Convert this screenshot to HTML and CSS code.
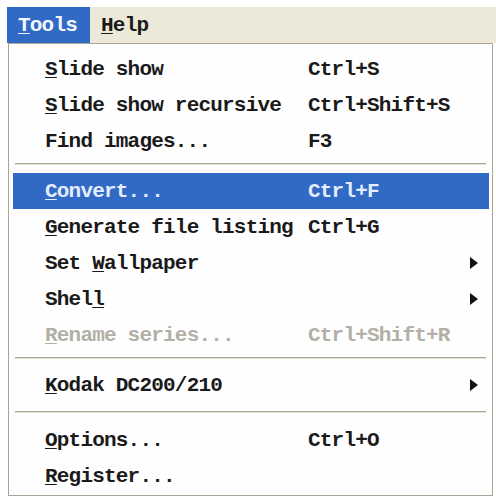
FILE: index.html
```html
<!DOCTYPE html>
<html>
<head>
<meta charset="utf-8">
<link rel="stylesheet" href="styles.css">
</head>
<body>
<div class="screen">
  <div class="menubar">
    <div class="top-item active"><u>T</u>ools</div>
    <div class="top-item"><u>H</u>elp</div>
  </div>
  <div class="menu">
    <div class="row"><span class="label"><u>S</u>lide show</span><span class="key">Ctrl+S</span></div>
    <div class="row"><span class="label"><u>S</u>lide show recursive</span><span class="key">Ctrl+Shift+S</span></div>
    <div class="row"><span class="label">Find images...</span><span class="key">F3</span></div>
    <div class="sep"></div>
    <div class="row selected"><span class="label"><u>C</u>onvert...</span><span class="key">Ctrl+F</span></div>
    <div class="row"><span class="label"><u>G</u>enerate file listing</span><span class="key">Ctrl+G</span></div>
    <div class="row"><span class="label">Set <u>W</u>allpaper</span><span class="arrow"></span></div>
    <div class="row"><span class="label">Shel<u>l</u></span><span class="arrow"></span></div>
    <div class="row disabled"><span class="label"><u>R</u>ename series...</span><span class="key">Ctrl+Shift+R</span></div>
    <div class="sep"></div>
    <div class="row"><span class="label"><u>K</u>odak DC200/210</span><span class="arrow"></span></div>
    <div class="sep sep-wide"></div>
    <div class="row"><span class="label"><u>O</u>ptions...</span><span class="key">Ctrl+O</span></div>
    <div class="row"><span class="label"><u>R</u>egister...</span></div>
  </div>
</div>
</body>
</html>
```
FILE: styles.css
```css
html, body {
  margin: 0;
  padding: 0;
  background: #ffffff;
}
.screen {
  padding: 7px 0 0 7px;
  font-family: "Liberation Mono", "Courier New", monospace;
  font-size: 21px;
  font-weight: bold;
  letter-spacing: -0.8px;
  color: #1a1a1a;
}
.menubar {
  display: flex;
  height: 36px;
  background: #ece9d8;
  align-items: stretch;
}
.top-item {
  display: flex;
  align-items: center;
  padding: 0 10px 0 11px;
}
.top-item.active {
  background: #316ac5;
  color: #f4f6ff;
  padding: 0 13px 0 11px;
}
.menu {
  box-sizing: border-box;
  margin-left: 1px;
  width: 485px;
  border: 1px solid #a8a596;
  background: #fefefe;
  padding: 7px 3px 1px 4px;
}
.row {
  display: flex;
  align-items: center;
  height: 36px;
  padding: 0 11px 0 32px;
}
.label {
  width: 263px;
  flex: none;
  white-space: pre;
}
.key {
  white-space: pre;
}
.arrow {
  margin-left: auto;
  width: 0;
  height: 0;
  border-left: 8px solid #111;
  border-top: 6px solid transparent;
  border-bottom: 6px solid transparent;
}
.selected {
  background: #316ac5;
  color: #e4ecff;
}
.disabled {
  color: #b2b0a6;
}
.sep {
  height: 14px;
  display: flex;
  flex-direction: column;
  padding: 4px 3px 0 2px;
  box-sizing: border-box;
}
.sep-wide {
  height: 19px;
  padding-top: 8px;
}
.sep::before {
  content: "";
  display: block;
  height: 1px;
  background: #a8a596;
}
.sep::after {
  content: "";
  display: block;
  height: 1px;
  background: #e4e2da;
}
u {
  text-decoration-thickness: 1px;
  text-underline-offset: 2px;
}
```
